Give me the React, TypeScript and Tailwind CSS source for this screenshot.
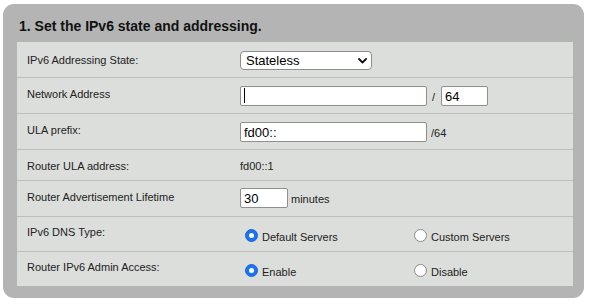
import { useState } from 'react';

type RadioProps = {
  checked: boolean;
  label: string;
  onSelect: () => void;
};

function Radio({ checked, label, onSelect }: RadioProps) {
  return (
    <label className="flex items-start cursor-pointer" onClick={onSelect}>
      {checked ? (
        <span className="mt-[12px] ml-[5px] flex h-[13px] w-[13px] items-center justify-center rounded-full border border-[#1b63d6] bg-[#1a74f2]">
          <span className="h-[5px] w-[5px] rounded-full bg-white" />
        </span>
      ) : (
        <span className="mt-[12px] ml-[5px] h-[13px] w-[13px] rounded-full border border-[#8a8a8a] bg-white" />
      )}
      <span className="mt-[14px] ml-[4px] leading-[13px]">{label}</span>
    </label>
  );
}

export default function App() {
  const [mode, setMode] = useState('Stateless');
  const [network, setNetwork] = useState('');
  const [prefixLen, setPrefixLen] = useState('64');
  const [ula, setUla] = useState('fd00::');
  const [lifetime, setLifetime] = useState('30');
  const [dnsType, setDnsType] = useState('default');
  const [adminAccess, setAdminAccess] = useState('enable');

  const inputCls =
    'h-[20px] rounded-[2px] border border-[#8f8f8f] bg-white pl-[3px] text-[13px] text-black outline-none';

  return (
    <div className="min-h-screen bg-white pt-[4px] pl-[3px] font-['Liberation_Sans',Arial,sans-serif] text-[11px] text-[#222]">
      <div className="h-[294px] w-[581px] rounded-[11px] bg-[#b3b4b3] pt-[14px] pl-[14px] pr-[11px]">
        <h2 className="mb-[8px] pl-[2px] text-[14px] font-bold leading-[16px] text-[#111]">
          1. Set the IPv6 state and addressing.
        </h2>

        <div className="bg-[#dcdedb]">
          <div className="flex h-[36px] border-b border-[#bcbdbc]">
            <div className="w-[223px] pl-[10px] pt-[12px] leading-[13px]">IPv6 Addressing State:</div>
            <div className="relative pt-[9px]">
              <select
                value={mode}
                onChange={(e) => setMode(e.target.value)}
                className="h-[19px] w-[132px] appearance-none rounded-[4px] border border-[#8e8e8e] bg-white pl-[5px] text-[13px] leading-[17px] text-black outline-none"
              >
                <option>Stateless</option>
                <option>Stateful</option>
                <option>Disabled</option>
              </select>
              <svg
                className="pointer-events-none absolute left-[118px] top-[16px]"
                width="9"
                height="6"
                viewBox="0 0 9 6"
                fill="none"
              >
                <path d="M1 1l3.5 3.5L8 1" stroke="#111" strokeWidth="1.8" strokeLinecap="round" strokeLinejoin="round" />
              </svg>
            </div>
          </div>

          <div className="flex h-[36px] border-b border-[#bcbdbc]">
            <div className="w-[223px] pl-[10px] pt-[10px] leading-[13px]">Network Address</div>
            <div className="flex items-baseline pt-[8px]">
              <div className="relative">
                <input
                  value={network}
                  onChange={(e) => setNetwork(e.target.value)}
                  className={`${inputCls} w-[187px]`}
                />
                <span className="absolute left-[4px] top-[2px] h-[15px] w-px bg-black" />
              </div>
              <span className="ml-[5px]">/</span>
              <input
                value={prefixLen}
                onChange={(e) => setPrefixLen(e.target.value)}
                className={`${inputCls} ml-[6px] w-[47px]`}
              />
            </div>
          </div>

          <div className="flex h-[36px] border-b border-[#bcbdbc]">
            <div className="w-[223px] pl-[10px] pt-[10px] leading-[13px]">ULA prefix:</div>
            <div className="flex items-baseline pt-[8px]">
              <input value={ula} onChange={(e) => setUla(e.target.value)} className={`${inputCls} w-[187px]`} />
              <span className="ml-[4px]">/64</span>
            </div>
          </div>

          <div className="flex h-[31px] border-b border-[#bcbdbc]">
            <div className="w-[223px] pl-[10px] pt-[10px] leading-[13px]">Router ULA address:</div>
            <div className="pt-[10px] leading-[13px]">fd00::1</div>
          </div>

          <div className="flex h-[36px] border-b border-[#bcbdbc]">
            <div className="w-[223px] pl-[10px] pt-[10px] leading-[13px]">Router Advertisement Lifetime</div>
            <div className="flex items-baseline pt-[7px]">
              <input
                value={lifetime}
                onChange={(e) => setLifetime(e.target.value)}
                className={`${inputCls} w-[48px]`}
              />
              <span className="ml-[3px]">minutes</span>
            </div>
          </div>

          <div className="flex h-[35px] border-b border-[#bcbdbc]">
            <div className="w-[223px] pl-[10px] pt-[9px] leading-[13px]">IPv6 DNS Type:</div>
            <div className="flex">
              <div className="w-[169px]">
                <Radio checked={dnsType === 'default'} label="Default Servers" onSelect={() => setDnsType('default')} />
              </div>
              <Radio checked={dnsType === 'custom'} label="Custom Servers" onSelect={() => setDnsType('custom')} />
            </div>
          </div>

          <div className="flex h-[34px]">
            <div className="w-[223px] pl-[10px] pt-[9px] leading-[13px]">Router IPv6 Admin Access:</div>
            <div className="flex">
              <div className="w-[169px]">
                <Radio checked={adminAccess === 'enable'} label="Enable" onSelect={() => setAdminAccess('enable')} />
              </div>
              <Radio checked={adminAccess === 'disable'} label="Disable" onSelect={() => setAdminAccess('disable')} />
            </div>
          </div>
        </div>
      </div>
    </div>
  );
}
